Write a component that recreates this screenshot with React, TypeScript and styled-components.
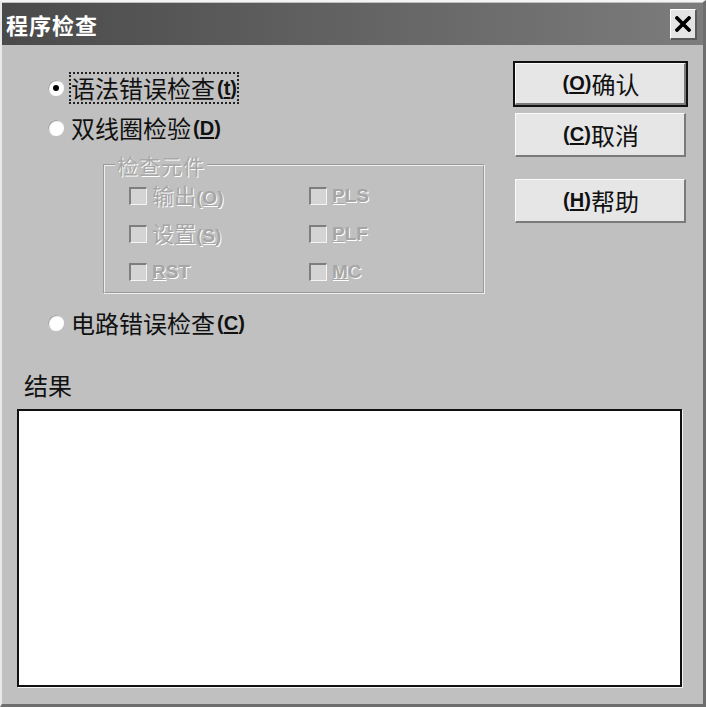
import React, { useState } from 'react'
import styled, { createGlobalStyle } from 'styled-components'

const GlobalStyle = createGlobalStyle`
  html, body {
    margin: 0;
    padding: 0;
    background: #c0c0c0;
  }
  * {
    box-sizing: border-box;
  }
`

const CJK = `"Noto Sans CJK SC", "Liberation Sans", sans-serif`

const Dialog = styled.div`
  width: 706px;
  height: 707px;
  background: #c0c0c0;
  border-top: 2px solid #f4f4f4;
  border-left: 2px solid #e8e8e8;
  border-right: 3px solid #6e6e6e;
  border-bottom: 3px solid #6e6e6e;
  display: flex;
  flex-direction: column;
  font-family: ${CJK};
`

const TitleBar = styled.div`
  height: 42px;
  margin-top: 1px;
  background: linear-gradient(to right, #4a4a4a, #7c7c7c);
  display: flex;
  align-items: center;
  justify-content: space-between;
  padding: 0 6px 0 4px;
`

const Title = styled.div`
  color: #fff;
  font-size: 22px;
  font-weight: 700;
  letter-spacing: 1px;
`

const CloseBtn = styled.div`
  width: 27px;
  height: 31px;
  background: #e4e4e4;
  border-top: 1px solid #fff;
  border-left: 1px solid #fff;
  border-right: 2px solid #5a5a5a;
  border-bottom: 2px solid #5a5a5a;
  display: flex;
  align-items: center;
  justify-content: center;
`

const Body = styled.div`
  flex: 1;
  display: flex;
  flex-direction: column;
  padding: 16px 17px 17px 13px;
`

const Top = styled.div`
  display: flex;
  justify-content: space-between;
`

const Options = styled.div`
  display: flex;
  flex-direction: column;
  padding-left: 33px;
  padding-top: 10px;
`

const RadioRow = styled.div<{ gap?: number }>`
  display: flex;
  align-items: center;
  height: 34px;
  margin-bottom: ${p => p.gap || 0}px;
  color: #111;
  font-size: 24px;
`

const RadioDot = styled.div<{ checked?: boolean }>`
  width: 16px;
  height: 16px;
  border-radius: 50%;
  background: #fff;
  box-shadow: inset 1px 1px 1px #9a9a9a, 0 0 1px #d8d8d8;
  margin-right: 6px;
  display: flex;
  align-items: center;
  justify-content: center;

  &::after {
    content: '';
    display: ${p => (p.checked ? 'block' : 'none')};
    width: 6px;
    height: 6px;
    border-radius: 50%;
    background: #000;
  }
`

const Label = styled.span<{ focused?: boolean }>`
  display: inline-flex;
  align-items: center;
  padding: 0 1px;
  outline: ${p => (p.focused ? '2px dotted #222' : 'none')};
  outline-offset: -1px;
  line-height: 30px;
`

const Key = styled.span`
  font-family: "Liberation Sans", sans-serif;
  font-weight: 700;
  font-size: 20px;
  margin-left: 2px;

  u {
    text-underline-offset: 2px;
  }
`

const Group = styled.fieldset`
  margin: 8px 0 12px 55px;
  width: 382px;
  height: 141px;
  border: 2px groove #eeeeee;
  padding: 0 0 0 24px;
`

const Legend = styled.legend`
  font-size: 21px;
  color: #a8a8a8;
  text-shadow: 1px 1px 0 #fff;
  padding: 0 2px;
  margin-left: -14px;
  line-height: 24px;
  letter-spacing: 1px;
`

const CheckGrid = styled.div`
  display: grid;
  grid-template-columns: 180px 150px;
  grid-auto-rows: 38px;
`

const CheckItem = styled.div`
  display: flex;
  align-items: center;
  gap: 5px;
  color: #a6a6a6;
  text-shadow: 1px 1px 0 #fff;
  font-size: 22px;
  line-height: 26px;
`

const Box = styled.div`
  width: 18px;
  height: 18px;
  background: #d4d4d4;
  border-top: 2px solid #7e7e7e;
  border-left: 2px solid #7e7e7e;
  border-right: 1px solid #f4f4f4;
  border-bottom: 1px solid #f4f4f4;
`

const Latin = styled.span`
  font-family: "Liberation Sans", sans-serif;
  font-weight: 700;
  font-size: 19px;
`

const Buttons = styled.div`
  display: flex;
  flex-direction: column;
  width: 171px;
  padding-top: 2px;
`

const Btn = styled.div<{ primary?: boolean; gap?: number }>`
  height: ${p => (p.primary ? 42 : 44)}px;
  margin-bottom: ${p => p.gap || 0}px;
  background: #e6e6e6;
  border-top: 1px solid #fafafa;
  border-left: 1px solid #fafafa;
  border-right: 2px solid #7a7a7a;
  border-bottom: 2px solid #7a7a7a;
  outline: ${p => (p.primary ? '2px solid #111' : 'none')};
  display: flex;
  align-items: center;
  justify-content: center;
  font-size: 24px;
  color: #111;
`

const ResultLabel = styled.div`
  font-size: 24px;
  color: #111;
  margin: 27px 0 7px 9px;
`

const Result = styled.div`
  flex: 1;
  margin-left: 2px;
  margin-right: 4px;
  background: #fff;
  border: 2px solid #111;
  box-shadow: 1px 1px 0 #f4f4f4;
`

const CloseIcon = () => (
  <svg width="16" height="16" viewBox="0 0 16 16">
    <path d="M2 2 L14 14 M14 2 L2 14" stroke="#000" strokeWidth="3.6" strokeLinecap="square" />
  </svg>
)

const App = () => {
  const [mode, setMode] = useState(0)

  const checks = [
    ['输出', 'O'], ['PLS', ''],
    ['设置', 'S'], ['PLF', ''],
    ['RST', ''], ['MC', ''],
  ]

  return (
    <Dialog>
      <GlobalStyle />
      <TitleBar>
        <Title>程序检查</Title>
        <CloseBtn><CloseIcon /></CloseBtn>
      </TitleBar>
      <Body>
        <Top>
          <Options>
            <RadioRow gap={6} onClick={() => setMode(0)}>
              <RadioDot checked={mode === 0} />
              <Label focused>语法错误检查<Key>(<u>t</u>)</Key></Label>
            </RadioRow>
            <RadioRow onClick={() => setMode(1)}>
              <RadioDot checked={mode === 1} />
              <Label>双线圈检验<Key>(<u>D</u>)</Key></Label>
            </RadioRow>
            <Group>
              <Legend>检查元件</Legend>
              <CheckGrid>
                {checks.map(([name, key]) => (
                  <CheckItem key={name}>
                    <Box />
                    {key ? (
                      <span>{name}<Latin>(<u>{key}</u>)</Latin></span>
                    ) : (
                      <Latin><u>{name[0]}</u>{name.slice(1)}</Latin>
                    )}
                  </CheckItem>
                ))}
              </CheckGrid>
            </Group>
            <RadioRow onClick={() => setMode(2)}>
              <RadioDot checked={mode === 2} />
              <Label>电路错误检查<Key>(<u>C</u>)</Key></Label>
            </RadioRow>
          </Options>
          <Buttons>
            <Btn primary gap={8}><Key>(<u>O</u>)</Key>确认</Btn>
            <Btn gap={22}><Key>(<u>C</u>)</Key>取消</Btn>
            <Btn><Key>(<u>H</u>)</Key>帮助</Btn>
          </Buttons>
        </Top>
        <ResultLabel>结果</ResultLabel>
        <Result />
      </Body>
    </Dialog>
  )
}

export default App
